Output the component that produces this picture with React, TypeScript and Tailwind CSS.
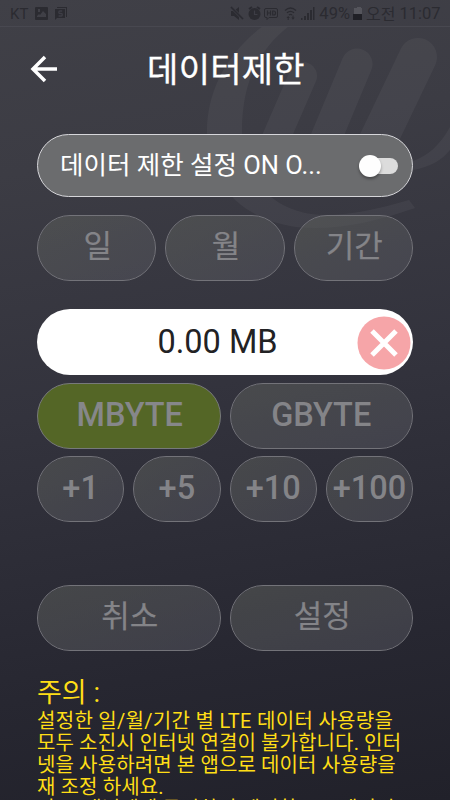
import React from "react";

const PILL = "flex items-center justify-center rounded-full border";
const DIM = "border-[#737379] bg-gradient-to-br from-[#5f625c]/50 to-[#555560]/50 bg-clip-padding text-[#848488]";
const HANGUL = "pb-[2px] pl-[2px] text-[31px] [-webkit-text-stroke:0.2px_#848488]";

const PERIODS = ["일", "월", "기간"];
const STEPS = ["+1", "+5", "+10", "+100"];

function Watermark() {
  return (
    <svg className="pointer-events-none absolute inset-0" width="450" height="800" viewBox="0 0 450 800" fill="none">
      <g opacity="0.04">
        <path d="M263 26C226 54 207 92 207 132C207 190 252 228 315 228C350 228 380 220 415 208L409 200C378 209 350 215 325 215C275 215 242 180 242 130C242 86 256 52 289 26Z" fill="#fff" />
        <path d="M450 127C440 145 428 156 413 161V170C430 167 442 160 450 150Z" fill="#fff" />
        <g stroke="#fff" strokeLinecap="round">
          <path d="M303 76L270 152" strokeWidth="28" />
          <path d="M357 64L317 160" strokeWidth="31" />
          <path d="M418 57L364 170" strokeWidth="38" />
        </g>
      </g>
    </svg>
  );
}

function StatusBar() {
  return (
    <header className="relative h-[27px] border-b border-[#484850] text-[#2b2b31]">
      <svg className="absolute inset-0" width="450" height="26" viewBox="0 0 450 26" fill="currentColor">
        {/* picture */}
        <path fillRule="evenodd" d="M36 7h11q1 0 1 1v11q0 1-1 1H36q-1 0-1-1V8q0-1 1-1ZM37 17h9v-3l-3-3-3 4-1-1-2 2ZM38 9v3h2V9Z" />
        {/* message */}
        <path d="M57 7h10v10h-1V8h-9Z" />
        <path d="M55 9h10v9h-8l-2 2Z" />
        <path d="M62.200 11h-2.400q-1 0-1 1.200t1 1.300h1.500q1 0 1 1.200t-1 1.300h-2.700" fill="none" stroke="#3e3e46" strokeWidth="1.300" />
        {/* muted speaker */}
        <path d="M231 11h3l5-4v13l-5-4h-3Z" />
        <path d="M231 7l12 12" stroke="#3d3d45" strokeWidth="3" />
        <path d="M231 7l12 12" stroke="currentColor" strokeWidth="1.500" />
        {/* alarm */}
        <circle cx="254.500" cy="14" r="6" />
        <path d="M249 9l3-2M260 9l-3-2" stroke="currentColor" strokeWidth="2" />
        <path d="M254.500 10.500v4h3" fill="none" stroke="#3d3d45" strokeWidth="1.200" />
        {/* hd */}
        <path d="M266 8.500h10q1.500 0 1.500 1.500v6q0 1.500-1.500 1.500h-7l-2 2v-2h-1q-1.500 0-1.500-1.500v-6q0-1.500 1.500-1.500Z" fill="none" stroke="currentColor" />
        <path d="M267.500 10.500v5M270.500 10.500v5M267.500 13h3M272.700 11v4h1q1.800 0 1.800-2t-1.800-2Z" fill="none" stroke="currentColor" strokeWidth="1.200" />
        {/* wifi */}
        <g fill="none" stroke="currentColor" strokeWidth="1.300">
          <path d="M285 10.500q5.500-5 11 0M287 12.800q3.500-3 7 0M289 15q1.500-1.300 3 0" />
        </g>
        <path d="M286.500 18l1.700-2 1.700 2ZM291.300 17.500h3.400l-1.700 2.200ZM287.700 17h1v3h-1ZM292.500 15.500h1v3h-1Z" />
        {/* signal */}
        <path d="M301 18h1.500v2H301ZM304 16h2v4h-2ZM307 13h2v7h-2ZM310 10h2v10h-2ZM313 7h1.500v13H313Z" />
        {/* battery */}
        <path d="M355 8h2V7h4v1h1v6h-8V8Z" fill="#55555c" />
        <path d="M353 14h9v6h-9Z" fill="#202026" />
      </svg>
      <div className="flex h-[27px] items-center px-[10px] pt-[2px] font-['Roboto','Noto_Sans_CJK_KR',sans-serif] leading-none">
        <span className="text-[15px]">KT</span>
        <span className="mr-[16px] ml-auto text-[16.500px]">49%</span>
        <span className="flex w-[74px] items-center gap-[4px] whitespace-nowrap">
          <span className="text-[16px]">오전</span>
          <span className="text-[16.500px]">11:07</span>
        </span>
      </div>
    </header>
  );
}

export default function App() {
  return (
    <div className="relative h-[800px] w-[450px] overflow-hidden bg-[linear-gradient(170deg,#404047_0%,#3c3c44_20%,#33333d_48%,#272731_80%,#21212a_100%)] font-['Roboto','Noto_Sans_CJK_KR',sans-serif]">
      <Watermark />
      <div className="relative">
        <StatusBar />

        <div className="relative flex h-[107px] justify-center pt-[18px] pl-[2px] text-white">
          <svg className="absolute top-[28px] left-[29px]" width="30" height="28" viewBox="0 0 30 28" fill="none" stroke="currentColor" strokeWidth="3.500">
            <path d="M28 14H4M16 2L4 14L16 26" />
          </svg>
          <h1 className="text-[34px] leading-[50px] font-normal tracking-[0.3px] [-webkit-text-stroke:0.3px_#fff]">데이터제한</h1>
        </div>

        <main className="px-[37px]">
          <div className="flex h-[63px] items-center rounded-full border border-[#d6d6da] bg-[#6b6c6e] pr-[14px] pl-[22px] text-white">
            <span className="pt-[1px] text-[25.500px] leading-none whitespace-nowrap">데이터 제한 설정 ON O...</span>
            <span className="relative ml-auto h-[16px] w-[38px] rounded-full bg-[#dcdcdc]">
              <span className="absolute -top-[3px] -left-[1px] h-[22px] w-[22px] rounded-full bg-[#fefefe] shadow-[0_2px_3px_rgba(0,0,0,0.35)]" />
            </span>
          </div>

          <div className="mt-[18px] grid grid-cols-3 gap-[9px]">
            {PERIODS.map((label) => (
              <button key={label} className={`${PILL} ${DIM} ${HANGUL} h-[66px]`}>{label}</button>
            ))}
          </div>

          <div className="relative mt-[28px] flex h-[66px] items-center justify-center rounded-full bg-white pr-[15px] text-[32.500px] text-[#222224]">
            0.00 MB
            <svg className="absolute top-[7px] right-[2px]" width="54" height="54" viewBox="0 0 54 54">
              <circle cx="27" cy="27" r="26.500" fill="#f6a5a8" />
              <path d="M15 15L39 39M39 15L15 39" stroke="#fff" strokeWidth="5" />
            </svg>
          </div>

          <div className="mt-[8px] grid grid-cols-2 gap-[9px] text-[32.500px] font-medium">
            <button className={`${PILL} h-[66px] border-[#77797b] bg-[#546626] pb-[1px] pl-[2px] text-[#86878a]`}>MBYTE</button>
            <button className={`${PILL} ${DIM} h-[66px] pb-[1px]`}>GBYTE</button>
          </div>

          <div className="mt-[7px] grid grid-cols-4 gap-[9px] text-[32.500px] font-medium">
            {STEPS.map((label) => (
              <button key={label} className={`${PILL} ${DIM} h-[66px] pb-[1px]`}>{label}</button>
            ))}
          </div>

          <div className="mt-[63px] grid grid-cols-2 gap-[9px]">
            <button className={`${PILL} ${DIM} ${HANGUL} h-[66px]`}>취소</button>
            <button className={`${PILL} ${DIM} ${HANGUL} h-[66px]`}>설정</button>
          </div>

          <section className="mt-[25px] whitespace-nowrap text-[#ffde16]">
            <h2 className="text-[27px] leading-[34px] font-normal">주의 :</h2>
            <p className="text-[20px] leading-[22px] tracking-[0.120px]">
              <span className="tracking-[0.300px]">설정한 일/월/기간 별 LTE 데이터 사용량을</span><br />
              모두 소진시 인터넷 연결이 불가합니다. 인터<br />
              넷을 사용하려면 본 앱으로 데이터 사용량을<br />
              재 조정 하세요.<br />
              단, 그램님에게 동의하여 제어한 LTE 데이터
            </p>
          </section>
        </main>
      </div>
    </div>
  );
}
